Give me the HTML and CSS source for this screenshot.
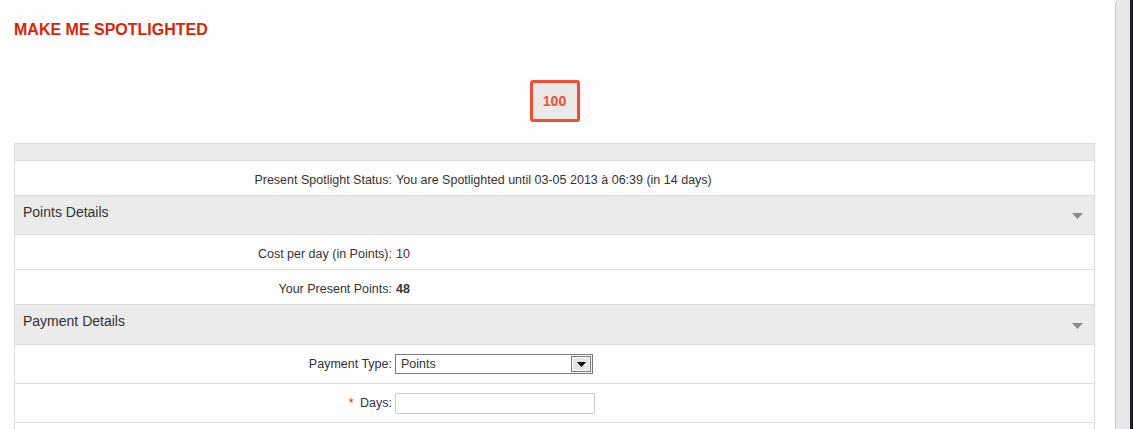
FILE: index.html
```html
<!DOCTYPE html>
<html>
<head>
<meta charset="utf-8">
<link rel="stylesheet" href="styles.css">
</head>
<body>
<div class="main">
  <h1 class="title">MAKE ME SPOTLIGHTED</h1>
  <div class="score-wrap"><div class="score">100</div></div>
  <div class="table">
    <div class="head-empty"></div>
    <div class="row text-row"><div class="label">Present Spotlight Status:</div><div class="value">You are Spotlighted until 03-05 2013 à 06:39 (in 14 days)</div></div>
    <div class="section"><span>Points Details</span><svg class="caret" width="11" height="6" viewBox="0 0 11 6"><path d="M0 0H11L5.5 6Z" fill="#8a8a8a"/></svg></div>
    <div class="row text-row"><div class="label">Cost per day (in Points):</div><div class="value">10</div></div>
    <div class="row text-row"><div class="label">Your Present Points:</div><div class="value"><b>48</b></div></div>
    <div class="section tall"><span>Payment Details</span><svg class="caret" width="11" height="6" viewBox="0 0 11 6"><path d="M0 0H11L5.5 6Z" fill="#8a8a8a"/></svg></div>
    <div class="row form-row"><div class="label">Payment Type:</div><div class="value"><div class="select"><span>Points</span><span class="sel-btn"><svg width="9" height="5" viewBox="0 0 9 5"><path d="M0 0H9L4.5 5Z" fill="#000"/></svg></span></div></div></div>
    <div class="row form-row"><div class="label"><span class="req">*</span> Days:</div><div class="value"><div class="input"></div></div></div>
    <div class="row last"></div>
  </div>
</div>
<div class="side"></div>
</body>
</html>
```
FILE: styles.css
```css
html, body {
  margin: 0;
  padding: 0;
  background: #fff;
}
body {
  display: flex;
  height: 429px;
  overflow: hidden;
  font-family: "Liberation Sans", Arial, sans-serif;
  color: #333;
  font-size: 12.5px;
}
.main {
  flex: 1;
  padding: 0 20px 0 14px;
}
.side {
  width: 18px;
  box-sizing: border-box;
  border-left: 1px solid #c8c8c8;
  border-right: 3px solid #1c1b2e;
  background: #e8e8e8;
  border-top-left-radius: 4px;
}
.title {
  margin: 0;
  padding-top: 21px;
  font-size: 16px;
  line-height: 17px;
  font-weight: bold;
  color: #dd2200;
}
.score-wrap {
  display: flex;
  justify-content: center;
  padding-top: 42px;
  padding-bottom: 21px;
}
.score {
  width: 50px;
  height: 42px;
  box-sizing: border-box;
  border: 3px solid #f44e30;
  border-radius: 3px;
  background: #e9e9e9;
  color: #f44e30;
  font-weight: bold;
  font-size: 14px;
  display: flex;
  align-items: center;
  justify-content: center;
}
.table {
  border: 1px solid #dcdcdc;
  border-bottom: none;
}
.head-empty {
  height: 16px;
  background: #ebebeb;
  border-bottom: 1px solid #dcdcdc;
}
.row {
  display: grid;
  grid-template-columns: 377px 1fr;
  column-gap: 3px;
  align-items: center;
  height: 34px;
  border-bottom: 1px solid #dcdcdc;
}
.row.text-row {
  box-sizing: border-box;
  height: 35px;
  padding-top: 3px;
}
.row.text-row .value {
  padding-left: 1px;
}
.row.form-row {
  height: 38px;
}
.row.last {
  height: 20px;
  border-bottom: none;
}
.label {
  text-align: right;
}
.req {
  color: #e02020;
  margin-right: 3px;
}
.section {
  display: flex;
  align-items: center;
  justify-content: space-between;
  height: 38px;
  background: #ebebeb;
  border-bottom: 1px solid #dcdcdc;
  padding: 0 11px 0 8px;
  font-size: 14px;
}
.section.tall {
  height: 39px;
}
.section span {
  margin-top: -6px;
}
.section.tall span {
  margin-top: -8px;
}
.caret {
  margin-top: 2px;
}
.select {
  width: 198px;
  height: 20px;
  box-sizing: border-box;
  border: 1px solid #7a7a7a;
  display: flex;
  align-items: center;
  justify-content: space-between;
  padding-left: 5px;
  background: #fff;
}
.sel-btn {
  width: 20px;
  height: 16px;
  box-sizing: border-box;
  border: 1px solid #777;
  box-shadow: inset 0 0 0 1px #fff;
  background: #e6e6e6;
  display: flex;
  align-items: center;
  justify-content: center;
  margin-right: 1px;
}
.input {
  width: 200px;
  height: 21px;
  box-sizing: border-box;
  border: 1px solid #c8c8c8;
  border-radius: 2px;
  background: #fff;
}
```
